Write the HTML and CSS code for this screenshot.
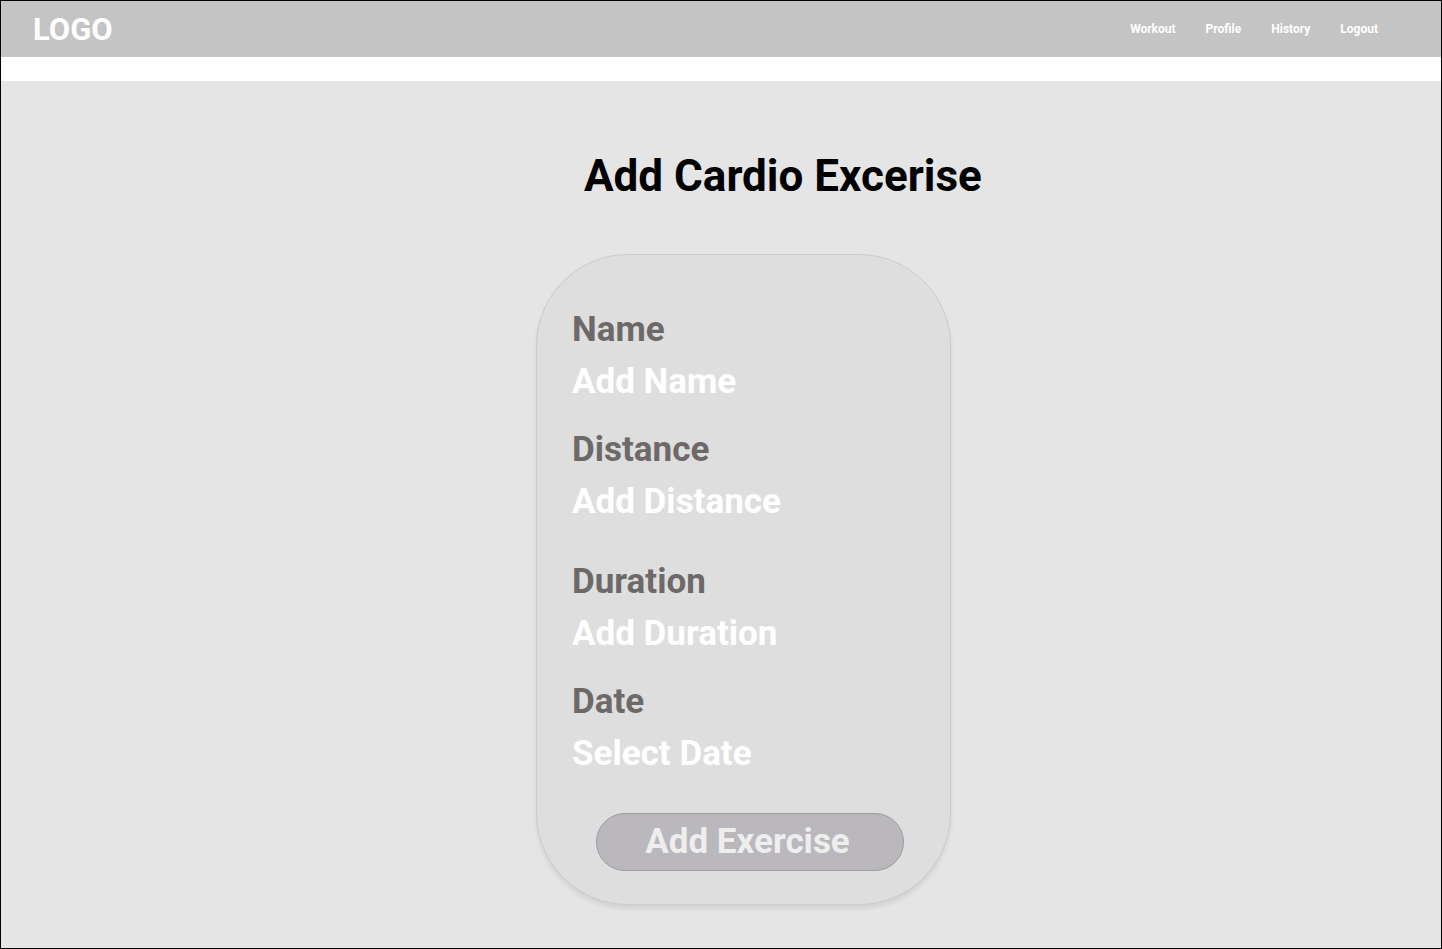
FILE: index.html
```html
<!DOCTYPE html>
<html lang="en">
<head>
<meta charset="utf-8">
<title>Add Cardio Excerise</title>
<link rel="stylesheet" href="styles.css">
</head>
<body>
<div class="frame">
  <header class="topbar">
    <div class="logo">LOGO</div>
    <nav class="nav">
      <a href="#">Workout</a>
      <a href="#">Profile</a>
      <a href="#">History</a>
      <a href="#">Logout</a>
    </nav>
  </header>
  <div class="strip"></div>
  <main class="main">
    <h1 class="title">Add Cardio Excerise</h1>
    <form class="card">
      <div class="field f-name">
        <div class="label">Name</div>
        <div class="input">Add Name</div>
      </div>
      <div class="field f-distance">
        <div class="label">Distance</div>
        <div class="input">Add Distance</div>
      </div>
      <div class="field f-duration">
        <div class="label">Duration</div>
        <div class="input">Add Duration</div>
      </div>
      <div class="field f-date">
        <div class="label">Date</div>
        <div class="input">Select Date</div>
      </div>
      <button type="button" class="btn">Add Exercise</button>
    </form>
  </main>
</div>
</body>
</html>
```
FILE: styles.css
```css
* { box-sizing: border-box; }
html, body { margin: 0; padding: 0; }
body {
  font-family: Roboto, "Liberation Sans", Arial, sans-serif;
  background: #ffffff;
}
.frame {
  width: 1442px;
  height: 949px;
  border: 1px solid #000;
  display: flex;
  flex-direction: column;
  overflow: hidden;
}
.topbar {
  height: 56px;
  background: #c4c4c4;
  display: flex;
  align-items: center;
  justify-content: space-between;
  padding: 0 62px 0 32px;
}
.logo {
  color: #fff;
  font-weight: 700;
  font-size: 31px;
  line-height: 1;
}
.nav {
  display: flex;
  gap: 30px;
  margin-right: 1px;
}
.nav a {
  color: #fff;
  text-decoration: none;
  font-weight: 700;
  font-size: 12px;
}
.strip {
  height: 24px;
  background: #fff;
}
.main {
  flex: 1;
  background: #e5e5e5;
  display: flex;
  flex-direction: column;
  align-items: flex-start;
}
.title {
  margin: 67px 0 0 583px;
  font-size: 44px;
  font-weight: 700;
  line-height: 56px;
  color: #000;
}
.card {
  margin: 50px 0 0 535px;
  width: 415px;
  height: 651px;
  background: #dedede;
  border: 1px solid #cbcbcb;
  border-radius: 92px;
  box-shadow: 0 4px 4px rgba(0, 0, 0, 0.08);
  padding: 55px 0 0 35px;
  display: flex;
  flex-direction: column;
}
.field {
  display: flex;
  flex-direction: column;
  gap: 12px;
}
.label, .input {
  font-weight: 700;
  font-size: 35px;
  line-height: 40px;
}
.label { color: #6d6969; }
.input { color: #ffffff; }
.f-distance { margin-top: 28px; }
.f-duration { margin-top: 40px; }
.f-date { margin-top: 28px; }
.btn {
  align-self: flex-start;
  margin: 39px 0 0 24px;
  width: 308px;
  height: 58px;
  background: #bab8bc;
  border: 1px solid #9d9ba0;
  border-radius: 29px;
  color: #eeeeee;
  font-family: inherit;
  font-weight: 700;
  font-size: 35px;
  line-height: 1;
  padding: 0 5px 2px 0;
}
```
